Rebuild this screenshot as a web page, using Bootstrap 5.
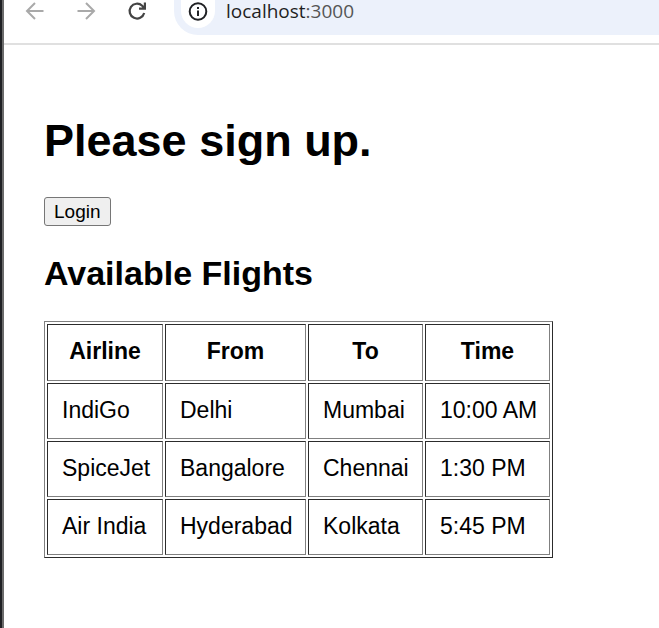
<!DOCTYPE html>
<html lang="en">
<head>
<meta charset="utf-8">
<meta name="viewport" content="width=device-width, initial-scale=1">
<title>Flights</title>
<link href="https://cdn.jsdelivr.net/npm/bootstrap@5.3.0/dist/css/bootstrap.min.css" rel="stylesheet">
<style>
body { font-family: "Liberation Sans", Arial, sans-serif; font-size: 23px; line-height: 26px; color: #000; background: #fff; }
.window { border-left: 2px solid #202124; }
.window-inner { border-left: 2px solid #6b6b6b; }
.toolbar { height: 45px; border-bottom: 2px solid #e0e0e0; padding-left: 20px; }
.tool-btn { width: 24px; height: 24px; margin-right: 26px; color: #a9a9a9; }
.tool-btn.reload { color: #444; }
.omnibox { height: 35px; background: #ecf1fb; border-bottom-left-radius: 24px; padding-left: 7px; }
.site-info { width: 34px; height: 28px; background: #fff; border-radius: 0 0 17px 17px; color: #202124; padding-top: 1px; }
.address { font-family: "Open Sans", "Noto Sans", sans-serif; font-size: 19px; line-height: 22px; color: #1f1f1f; margin-left: 11px; }
.address span { color: #555; }
main { padding: 70px 40px; }
h1 { font-size: 45px; line-height: 52px; margin: 0 0 30px; font-weight: 700; }
h2 { font-size: 34px; line-height: 40px; margin: 27px 0 28px; font-weight: 700; }
.login { font-size: 19px; line-height: 21px; padding: 3px 9px; border: 1px solid #767676; border-radius: 3px; background: #efefef; color: #000; }
.flights { border: 1px solid; border-color: #808080 #2c2c2c #2c2c2c #808080; border-collapse: separate; border-spacing: 2px; }
.flights th, .flights td { border: 1px solid; border-color: #2c2c2c #808080 #808080 #2c2c2c; padding: 13px 10px 15px 14px; height: 56px; }
.flights th { height: 57px; padding: 12px 14px 16px; text-align: center; }
.c-airline { width: 116px; }
.c-from { width: 141px; }
.c-to { width: 115px; }
.c-time { width: 125px; }
</style>
<script src="https://cdn.jsdelivr.net/npm/bootstrap@5.3.0/dist/js/bootstrap.bundle.min.js"></script>
</head>
<body>
<div class="window min-vh-100 d-flex">
<div class="window-inner flex-grow-1">
<header class="toolbar d-flex align-items-start">
  <button type="button" class="tool-btn btn border-0 p-0 d-flex" aria-label="Back"><svg width="24" height="24" viewBox="0 0 24 24" fill="none" stroke="currentColor" stroke-width="2"><path d="M19.500 11H4M11 3l-8 8 8 8"/></svg></button>
  <button type="button" class="tool-btn btn border-0 p-0 d-flex" aria-label="Forward"><svg width="24" height="24" viewBox="0 0 24 24" fill="none" stroke="currentColor" stroke-width="2"><path d="M3.500 11H20M12 3l8 8-8 8"/></svg></button>
  <button type="button" class="tool-btn reload btn border-0 p-0 d-flex" aria-label="Reload"><svg width="24" height="24" viewBox="0 0 24 24" fill="none" stroke="currentColor" stroke-width="2.200"><path d="M20.200 13A7.400 7.400 0 1 1 18.200 5.800L20.500 8.200M20.900 2.500V8.700H15"/></svg></button>
  <div class="omnibox d-flex flex-grow-1 align-items-start">
    <button type="button" class="site-info btn border-0 px-0 pb-0 d-flex justify-content-center" aria-label="Site information"><svg width="22" height="22" viewBox="0 0 22 22" fill="none" stroke="currentColor" stroke-width="2"><circle cx="11" cy="10.500" r="8.300"/><path d="M11 9.500V15M11 6V8"/></svg></button>
    <div class="address">localhost<span>:3000</span></div>
  </div>
</header>
<main>
  <h1>Please sign up.</h1>
  <button type="button" class="login d-block">Login</button>
  <h2>Available Flights</h2>
  <table class="flights">
    <thead><tr><th class="c-airline" scope="col">Airline</th><th class="c-from" scope="col">From</th><th class="c-to" scope="col">To</th><th class="c-time" scope="col">Time</th></tr></thead>
    <tbody>
      <tr><td>IndiGo</td><td>Delhi</td><td>Mumbai</td><td>10:00 AM</td></tr>
      <tr><td>SpiceJet</td><td>Bangalore</td><td>Chennai</td><td>1:30 PM</td></tr>
      <tr><td>Air India</td><td>Hyderabad</td><td>Kolkata</td><td>5:45 PM</td></tr>
    </tbody>
  </table>
</main>
</div>
</div>
</body>
</html>
